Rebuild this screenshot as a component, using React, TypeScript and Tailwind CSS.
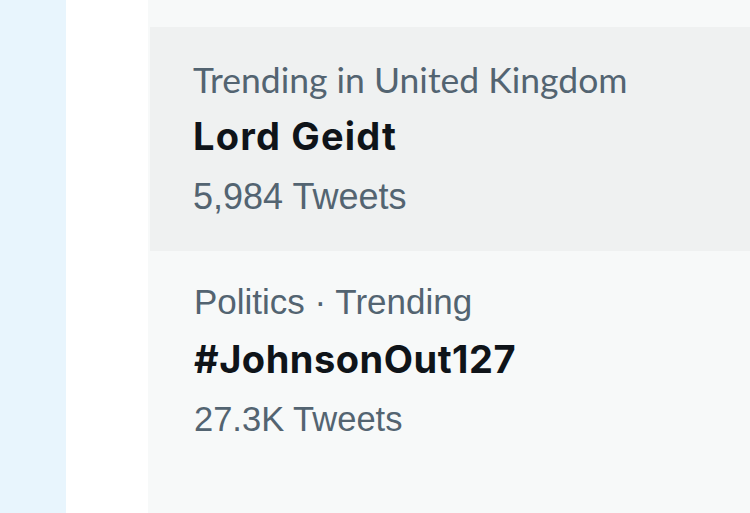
type Trend = {
  meta: string;
  title: string;
  count: string;
  rowClass: string;
  metaClass: string;
  titleClass: string;
  countClass: string;
};

const trends: Trend[] = [
  {
    meta: "Trending in United Kingdom",
    title: "Lord Geidt",
    count: "5,984 Tweets",
    rowClass: "ml-[2px] h-[224px] bg-[#eff1f1] pl-[43px] pt-[26px]",
    metaClass: "font-['Lato',sans-serif] text-[35.5px] leading-[53px]",
    titleClass: "text-[38px] leading-[61px] tracking-[1.2px]",
    countClass: "text-[36px] leading-[59px]",
  },
  {
    meta: "Politics · Trending",
    title: "#JohnsonOut127",
    count: "27.3K Tweets",
    rowClass: "pl-[46px] pt-[23px]",
    metaClass: "font-['Liberation_Sans',Arial,sans-serif] text-[35px] leading-[56px]",
    titleClass: "text-[38px] leading-[59px] tracking-[0.5px]",
    countClass: "text-[34.5px] leading-[60px]",
  },
];

function TrendRow({ meta, title, count, rowClass, metaClass, titleClass, countClass }: Trend) {
  return (
    <div className={rowClass}>
      <div className={`${metaClass} text-[#536471]`}>{meta}</div>
      <div className={`${titleClass} font-['Inter',sans-serif] font-bold text-[#0f1419]`}>{title}</div>
      <div className={`${countClass} font-['Liberation_Sans',Arial,sans-serif] text-[#536471]`}>{count}</div>
    </div>
  );
}

export default function App() {
  return (
    <div className="flex h-[513px] w-[750px] overflow-hidden bg-white">
      <div className="w-[66px] shrink-0 bg-[#e8f5fd]" />
      <div className="w-[82px] shrink-0 bg-white" />
      <div className="flex-1 bg-[#f7f9f9] pt-[27px]">
        {trends.map((t) => (
          <TrendRow key={t.title} {...t} />
        ))}
      </div>
    </div>
  );
}
